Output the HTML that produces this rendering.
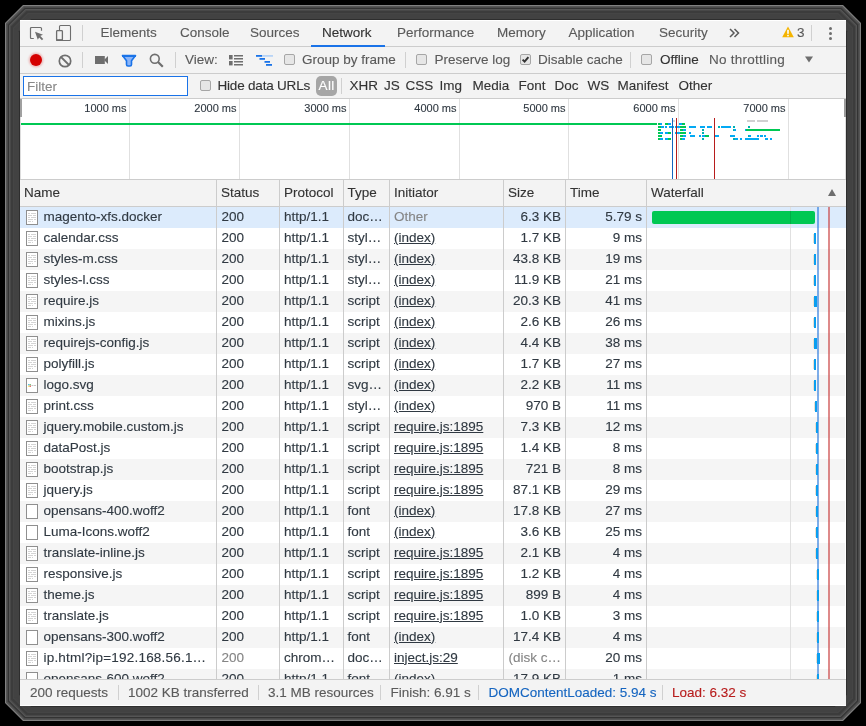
<!DOCTYPE html><html><head><meta charset="utf-8"><style>
*{margin:0;padding:0;box-sizing:border-box}
html,body{width:866px;height:726px;overflow:hidden;background:#000}
body{position:relative;font-family:"Liberation Sans",sans-serif;font-size:13.5px;color:#303942}
.a{position:absolute;white-space:nowrap}
.t{line-height:16px;height:16px;-webkit-text-stroke:0.12px currentColor}
.bd{background:#cccccc}
.cb{position:absolute;width:11px;height:11px;border:1px solid #a6a6a6;border-radius:2px;background:#e6e6e6}
</style></head><body><div id="w" style="position:absolute;left:0;top:0;width:866px;height:726px;will-change:transform">
<svg class="a" style="left:0;top:0" width="866" height="726"><polygon points="23.0,5 843.0,5 861,23.0 861,703.0 843.0,721 23.0,721 5,703.0 5,23.0" fill="#808080"/><polygon points="23.586,6 842.414,6 860,23.586 860,702.414 842.414,720 23.586,720 6,702.414 6,23.586" fill="#555555"/><polygon points="24.172,7 841.828,7 859,24.172 859,701.828 841.828,719 24.172,719 7,701.828 7,24.172" fill="#4a4a4a"/><polygon points="24.758,8 841.242,8 858,24.758 858,701.242 841.242,718 24.758,718 8,701.242 8,24.758" fill="#333333"/><polygon points="25.344,9 840.656,9 857,25.344 857,700.656 840.656,717 25.344,717 9,700.656 9,25.344" fill="#555555"/><polygon points="25.93,10 840.07,10 856,25.93 856,700.07 840.07,716 25.93,716 10,700.07 10,25.93" fill="#484848"/><polygon points="26.516,11 839.484,11 855,26.516 855,699.484 839.484,715 26.516,715 11,699.484 11,26.516" fill="#3c3c3c"/><polygon points="27.102,12 838.898,12 854,27.102 854,698.898 838.898,714 27.102,714 12,698.898 12,27.102" fill="#3c3c3c"/><polygon points="27.688000000000002,13 838.312,13 853,27.688000000000002 853,698.312 838.312,713 27.688000000000002,713 13,698.312 13,27.688000000000002" fill="#454545"/><polygon points="28.274,14 837.726,14 852,28.274 852,697.726 837.726,712 28.274,712 14,697.726 14,28.274" fill="#424242"/><polygon points="28.86,15 837.14,15 851,28.86 851,697.14 837.14,711 28.86,711 15,697.14 15,28.86" fill="#424242"/><polygon points="29.446,16 836.554,16 850,29.446 850,696.554 836.554,710 29.446,710 16,696.554 16,29.446" fill="#424242"/><polygon points="30.032,17 835.968,17 849,30.032 849,695.968 835.968,709 30.032,709 17,695.968 17,30.032" fill="#424242"/><polygon points="30.618000000000002,18 835.382,18 848,30.618000000000002 848,695.382 835.382,708 30.618000000000002,708 18,695.382 18,30.618000000000002" fill="#424242"/><polygon points="31.204,19 834.796,19 847,31.204 847,694.796 834.796,707 31.204,707 19,694.796 19,31.204" fill="#2e2e2e"/></svg>
<div class="a" style="left:20px;top:20px;width:826px;height:686px;background:#f3f3f3;overflow:hidden"></div>
<div class="a" style="left:20px;top:20px;width:826px;height:1px;background:#fff"></div>
<div class="a" style="left:20px;top:705px;width:826px;height:1px;background:#fff"></div>
<div class="a" style="left:20px;top:46px;width:826px;height:1px;background:#cccccc;"></div>
<div class="a t" style="left:100.5px;top:25px;color:#5a5a5a;">Elements</div>
<div class="a t" style="left:180px;top:25px;color:#5a5a5a;">Console</div>
<div class="a t" style="left:250px;top:25px;color:#5a5a5a;">Sources</div>
<div class="a t" style="left:322px;top:25px;color:#333333;">Network</div>
<div class="a t" style="left:397px;top:25px;color:#5a5a5a;">Performance</div>
<div class="a t" style="left:497px;top:25px;color:#5a5a5a;">Memory</div>
<div class="a t" style="left:568.5px;top:25px;color:#5a5a5a;">Application</div>
<div class="a t" style="left:659px;top:25px;color:#5a5a5a;">Security</div>
<div class="a" style="left:311px;top:45px;width:74px;height:2px;background:#1a73e8;"></div>
<svg class="a" style="left:29px;top:26px" width="16" height="16" viewBox="0 0 16 16"><path d="M4.8 12.5H2.5Q1.5 12.5 1.5 11.5V2.5Q1.5 1.5 2.5 1.5H11.5Q12.5 1.5 12.5 2.5V4.8" fill="none" stroke="#6e6e6e" stroke-width="1.2"/><path d="M6 5.8L14 8.7L11 10L8.8 13.8Z" fill="#6e6e6e"/><path d="M10 10L13.6 13.6" stroke="#6e6e6e" stroke-width="1.8"/></svg>
<svg class="a" style="left:55px;top:24px" width="17" height="18" viewBox="0 0 17 18"><rect x="4.5" y="1.5" width="11" height="15" rx="1" fill="none" stroke="#6e6e6e" stroke-width="1.1"/><rect x="1.6" y="6.6" width="5.8" height="9.8" rx="0.8" fill="#f3f3f3" stroke="#6e6e6e" stroke-width="1.3"/><rect x="1" y="15.2" width="7" height="1.6" fill="#6e6e6e"/></svg>
<div class="a" style="left:82px;top:25px;width:1px;height:16px;background:#d0d0d0;"></div>
<svg class="a" style="left:729px;top:28px" width="11" height="10" viewBox="0 0 11 10"><path d="M1 1L5 5L1 9M5.5 1L9.5 5L5.5 9" fill="none" stroke="#5a5a5a" stroke-width="1.5"/></svg>
<svg class="a" style="left:782px;top:26px" width="12" height="12" viewBox="0 0 12 12"><path d="M6 0.5L11.8 11.2H0.2Z" fill="#f4b400"/><rect x="5.2" y="3.8" width="1.6" height="4" fill="#fff"/><rect x="5.2" y="8.8" width="1.6" height="1.5" fill="#fff"/></svg>
<div class="a t" style="left:797px;top:25px;color:#5a5a5a;">3</div>
<div class="a" style="left:811px;top:25px;width:1px;height:16px;background:#d0d0d0;"></div>
<div class="a" style="left:828.6px;top:26.7px;width:3.4px;height:3.4px;border-radius:2px;background:#6e6e6e"></div>
<div class="a" style="left:828.6px;top:31.7px;width:3.4px;height:3.4px;border-radius:2px;background:#6e6e6e"></div>
<div class="a" style="left:828.6px;top:36.7px;width:3.4px;height:3.4px;border-radius:2px;background:#6e6e6e"></div>
<div class="a" style="left:20px;top:73px;width:826px;height:1px;background:#cccccc;"></div>
<div class="a" style="left:30px;top:54px;width:12px;height:12px;border-radius:6px;background:#d50000;box-shadow:0 0 2px 1.5px rgba(220,0,0,0.22)"></div>
<svg class="a" style="left:57.5px;top:53.5px" width="14" height="14" viewBox="0 0 14 14"><circle cx="7" cy="7" r="5.7" fill="none" stroke="#6e6e6e" stroke-width="1.7"/><path d="M3 3L11 11" stroke="#6e6e6e" stroke-width="1.8"/></svg>
<div class="a" style="left:82px;top:52px;width:1px;height:16px;background:#d0d0d0;"></div>
<svg class="a" style="left:95px;top:56px" width="13" height="8" viewBox="0 0 13 8"><rect x="0" y="0" width="9.8" height="8" fill="#6e6e6e"/><path d="M9 4L13 0V8Z" fill="#6e6e6e"/></svg>
<svg class="a" style="left:121px;top:54px" width="16" height="13" viewBox="0 0 16 13"><path d="M1.5 1.5H14.5L10.5 6.8V10.5Q10.5 12 9 12H7Q5.5 12 5.5 10.5V6.8Z" fill="#8ab4f8" stroke="#1a73e8" stroke-width="1.6" stroke-linejoin="round"/><rect x="1" y="1" width="14" height="2" fill="#1a73e8"/></svg>
<svg class="a" style="left:149px;top:53px" width="15" height="15" viewBox="0 0 15 15"><circle cx="5.8" cy="5.8" r="4.4" fill="none" stroke="#6e6e6e" stroke-width="1.6"/><path d="M9 9L13.8 13.8" stroke="#6e6e6e" stroke-width="2.2"/></svg>
<div class="a" style="left:175px;top:52px;width:1px;height:16px;background:#d0d0d0;"></div>
<div class="a t" style="left:185px;top:52px;color:#5a5a5a;">View:</div>
<svg class="a" style="left:229px;top:55px" width="14" height="11" viewBox="0 0 14 11"><rect x="0" y="0" width="3.6" height="4.4" fill="#6e6e6e"/><rect x="0" y="6" width="3.6" height="4.4" fill="#6e6e6e"/><rect x="5" y="0" width="9" height="1.5" fill="#6e6e6e"/><rect x="5" y="3" width="9" height="1.5" fill="#6e6e6e"/><rect x="5" y="6" width="9" height="1.5" fill="#6e6e6e"/><rect x="5" y="9" width="9" height="1.5" fill="#6e6e6e"/></svg>
<svg class="a" style="left:256px;top:55px" width="17" height="11" viewBox="0 0 17 11"><rect x="6" y="0" width="11" height="1.8" fill="#b8d4f6"/><rect x="0" y="0" width="6" height="1.8" fill="#1a73e8"/><rect x="3.5" y="3" width="5.5" height="1.8" fill="#1a73e8"/><rect x="8.5" y="6" width="5.5" height="1.8" fill="#1a73e8"/><rect x="10" y="9" width="6" height="1.8" fill="#1a73e8"/></svg>
<div class="cb" style="left:284px;top:54px"></div>
<div class="a t" style="left:302px;top:52px;color:#5a5a5a;">Group by frame</div>
<div class="a" style="left:405px;top:52px;width:1px;height:16px;background:#d0d0d0;"></div>
<div class="cb" style="left:416px;top:54px"></div>
<div class="a t" style="left:434.5px;top:52px;color:#5a5a5a;">Preserve log</div>
<div class="cb" style="left:520px;top:54px"></div>
<svg class="a" style="left:520px;top:54px" width="11" height="11" viewBox="0 0 11 11"><path d="M2.6 5.6L4.6 7.6L8.4 3.2" fill="none" stroke="#333" stroke-width="2"/></svg>
<div class="a t" style="left:538px;top:52px;color:#5a5a5a;">Disable cache</div>
<div class="a" style="left:630px;top:52px;width:1px;height:16px;background:#d0d0d0;"></div>
<div class="cb" style="left:641px;top:54px"></div>
<div class="a t" style="left:660px;top:52px;color:#333333;">Offline</div>
<div class="a t" style="left:709px;top:52px;color:#5a5a5a;letter-spacing:0.25px">No throttling</div>
<svg class="a" style="left:805px;top:56px" width="8" height="7" viewBox="0 0 8 7"><path d="M0 0.5H8L4 6.5Z" fill="#6e6e6e"/></svg>
<div class="a" style="left:20px;top:98px;width:826px;height:1px;background:#cccccc;"></div>
<div class="a" style="left:23px;top:76px;width:165px;height:20px;border:1px solid #1a73e8;background:#fff"></div>
<div class="a t" style="left:27px;top:79px;color:#888888;">Filter</div>
<div class="cb" style="left:200px;top:80px"></div>
<div class="a t" style="left:217.5px;top:78px;color:#333333;letter-spacing:-0.2px">Hide data URLs</div>
<div class="a" style="left:316px;top:76px;width:21px;height:20px;border-radius:5px;background:#a6a6a6"></div>
<div class="a t" style="left:318.5px;top:78px;color:#ffffff;letter-spacing:0.4px">All</div>
<div class="a" style="left:341px;top:78px;width:1px;height:16px;background:#d0d0d0;"></div>
<div class="a t" style="left:349.5px;top:78px;color:#333333;">XHR</div>
<div class="a t" style="left:384px;top:78px;color:#333333;">JS</div>
<div class="a t" style="left:405.5px;top:78px;color:#333333;">CSS</div>
<div class="a t" style="left:439.5px;top:78px;color:#333333;">Img</div>
<div class="a t" style="left:472.5px;top:78px;color:#333333;">Media</div>
<div class="a t" style="left:518.5px;top:78px;color:#333333;">Font</div>
<div class="a t" style="left:554.5px;top:78px;color:#333333;">Doc</div>
<div class="a t" style="left:587.5px;top:78px;color:#333333;">WS</div>
<div class="a t" style="left:617.5px;top:78px;color:#333333;">Manifest</div>
<div class="a t" style="left:678.5px;top:78px;color:#333333;">Other</div>
<div class="a" style="left:20px;top:99px;width:826px;height:80px;background:#ffffff;"></div>
<div class="a" style="left:20px;top:179px;width:826px;height:1px;background:#cccccc;"></div>
<div class="a" style="left:20px;top:99px;width:2px;height:18px;background:#a0a0a0;"></div>
<div class="a" style="left:20px;top:117px;width:1px;height:62px;background:#dddddd;"></div>
<div class="a" style="left:129px;top:99px;width:1px;height:80px;background:#e0e0e0;"></div>
<div class="a t" style="right:739.5px;top:100px;color:#303942;font-size:11px">1000 ms</div>
<div class="a" style="left:239px;top:99px;width:1px;height:80px;background:#e0e0e0;"></div>
<div class="a t" style="right:629.5px;top:100px;color:#303942;font-size:11px">2000 ms</div>
<div class="a" style="left:349px;top:99px;width:1px;height:80px;background:#e0e0e0;"></div>
<div class="a t" style="right:519.5px;top:100px;color:#303942;font-size:11px">3000 ms</div>
<div class="a" style="left:459px;top:99px;width:1px;height:80px;background:#e0e0e0;"></div>
<div class="a t" style="right:409.5px;top:100px;color:#303942;font-size:11px">4000 ms</div>
<div class="a" style="left:568px;top:99px;width:1px;height:80px;background:#e0e0e0;"></div>
<div class="a t" style="right:300.5px;top:100px;color:#303942;font-size:11px">5000 ms</div>
<div class="a" style="left:678px;top:99px;width:1px;height:80px;background:#e0e0e0;"></div>
<div class="a t" style="right:190.5px;top:100px;color:#303942;font-size:11px">6000 ms</div>
<div class="a" style="left:788px;top:99px;width:1px;height:80px;background:#e0e0e0;"></div>
<div class="a t" style="right:80.5px;top:100px;color:#303942;font-size:11px">7000 ms</div>
<div class="a" style="left:21px;top:123px;width:636px;height:2px;background:#00c853;"></div>
<div class="a" style="left:844px;top:99px;width:2px;height:18px;background:#9a9a9a;"></div>
<div class="a" style="left:658px;top:123px;width:2px;height:2px;background:#00c853;"></div>
<div class="a" style="left:660px;top:123px;width:2px;height:2px;background:#03a9f4;"></div>
<div class="a" style="left:665px;top:123px;width:3px;height:2px;background:#00c853;"></div>
<div class="a" style="left:668px;top:123px;width:3px;height:2px;background:#03a9f4;"></div>
<div class="a" style="left:679px;top:123px;width:3px;height:2px;background:#03a9f4;"></div>
<div class="a" style="left:682px;top:123px;width:3px;height:2px;background:#00c853;"></div>
<div class="a" style="left:658px;top:126px;width:3px;height:2px;background:#00c853;"></div>
<div class="a" style="left:661px;top:126px;width:3px;height:2px;background:#03a9f4;"></div>
<div class="a" style="left:665px;top:126px;width:2px;height:2px;background:#03a9f4;"></div>
<div class="a" style="left:669px;top:126px;width:5px;height:2px;background:#03a9f4;"></div>
<div class="a" style="left:675px;top:126px;width:5px;height:2px;background:#03a9f4;"></div>
<div class="a" style="left:680px;top:126px;width:6px;height:2px;background:#00c853;"></div>
<div class="a" style="left:689px;top:126px;width:7px;height:2px;background:#03a9f4;"></div>
<div class="a" style="left:700px;top:126px;width:5px;height:2px;background:#03a9f4;"></div>
<div class="a" style="left:707px;top:126px;width:5px;height:2px;background:#03a9f4;"></div>
<div class="a" style="left:718px;top:126px;width:2px;height:2px;background:#00b0b0;"></div>
<div class="a" style="left:721px;top:126px;width:10px;height:2px;background:#03a9f4;"></div>
<div class="a" style="left:733px;top:126px;width:2px;height:2px;background:#00b0b0;"></div>
<div class="a" style="left:748px;top:126px;width:2px;height:2px;background:#00b0b0;"></div>
<div class="a" style="left:658px;top:129px;width:3px;height:2px;background:#00c853;"></div>
<div class="a" style="left:680px;top:129px;width:3px;height:2px;background:#00c853;"></div>
<div class="a" style="left:683px;top:129px;width:3px;height:2px;background:#03a9f4;"></div>
<div class="a" style="left:702px;top:129px;width:2px;height:2px;background:#00b0b0;"></div>
<div class="a" style="left:733px;top:129px;width:1px;height:2px;background:#00b0b0;"></div>
<div class="a" style="left:734px;top:129px;width:2px;height:2px;background:#03a9f4;"></div>
<div class="a" style="left:745px;top:129px;width:2px;height:2px;background:#03a9f4;"></div>
<div class="a" style="left:658px;top:132px;width:2px;height:2px;background:#00c853;"></div>
<div class="a" style="left:660px;top:132px;width:3px;height:2px;background:#03a9f4;"></div>
<div class="a" style="left:665px;top:132px;width:3px;height:2px;background:#03a9f4;"></div>
<div class="a" style="left:668px;top:132px;width:3px;height:2px;background:#00c853;"></div>
<div class="a" style="left:675px;top:132px;width:5px;height:2px;background:#03a9f4;"></div>
<div class="a" style="left:680px;top:132px;width:6px;height:2px;background:#00c853;"></div>
<div class="a" style="left:689px;top:132px;width:2px;height:2px;background:#03a9f4;"></div>
<div class="a" style="left:702px;top:132px;width:2px;height:2px;background:#00b0b0;"></div>
<div class="a" style="left:658px;top:135px;width:4px;height:2px;background:#00c853;"></div>
<div class="a" style="left:680px;top:135px;width:3px;height:2px;background:#00c853;"></div>
<div class="a" style="left:683px;top:135px;width:3px;height:2px;background:#03a9f4;"></div>
<div class="a" style="left:690px;top:135px;width:5px;height:2px;background:#03a9f4;"></div>
<div class="a" style="left:699px;top:135px;width:2px;height:2px;background:#03a9f4;"></div>
<div class="a" style="left:702px;top:135px;width:3px;height:2px;background:#03a9f4;"></div>
<div class="a" style="left:705px;top:135px;width:4px;height:2px;background:#00c853;"></div>
<div class="a" style="left:715px;top:135px;width:4px;height:2px;background:#03a9f4;"></div>
<div class="a" style="left:730px;top:135px;width:5px;height:2px;background:#03a9f4;"></div>
<div class="a" style="left:748px;top:135px;width:1px;height:2px;background:#00b0b0;"></div>
<div class="a" style="left:749px;top:135px;width:2px;height:2px;background:#03a9f4;"></div>
<div class="a" style="left:757px;top:135px;width:2px;height:2px;background:#03a9f4;"></div>
<div class="a" style="left:760px;top:135px;width:3px;height:2px;background:#03a9f4;"></div>
<div class="a" style="left:764px;top:135px;width:2px;height:2px;background:#03a9f4;"></div>
<div class="a" style="left:658px;top:138px;width:2px;height:2px;background:#00c853;"></div>
<div class="a" style="left:660px;top:138px;width:3px;height:2px;background:#03a9f4;"></div>
<div class="a" style="left:665px;top:138px;width:3px;height:2px;background:#03a9f4;"></div>
<div class="a" style="left:668px;top:138px;width:3px;height:2px;background:#00c853;"></div>
<div class="a" style="left:680px;top:138px;width:2px;height:2px;background:#00c853;"></div>
<div class="a" style="left:682px;top:138px;width:3px;height:2px;background:#03a9f4;"></div>
<div class="a" style="left:702px;top:138px;width:2px;height:2px;background:#00b0b0;"></div>
<div class="a" style="left:733px;top:138px;width:2px;height:2px;background:#00b0b0;"></div>
<div class="a" style="left:735px;top:138px;width:3px;height:2px;background:#03a9f4;"></div>
<div class="a" style="left:740px;top:138px;width:2px;height:2px;background:#03a9f4;"></div>
<div class="a" style="left:745px;top:138px;width:14px;height:2px;background:#03a9f4;"></div>
<div class="a" style="left:765px;top:138px;width:3px;height:2px;background:#03a9f4;"></div>
<div class="a" style="left:770px;top:138px;width:2px;height:2px;background:#03a9f4;"></div>
<div class="a" style="left:747px;top:120px;width:8px;height:2px;background:#d0d0d0;"></div>
<div class="a" style="left:757px;top:120px;width:11px;height:2px;background:#d0d0d0;"></div>
<div class="a" style="left:673px;top:120px;width:2px;height:2px;background:#d8d8d8;"></div>
<div class="a" style="left:746px;top:129px;width:34px;height:2px;background:#00c853;"></div>
<div class="a" style="left:672px;top:118px;width:1px;height:61px;background:#1565c0;"></div>
<div class="a" style="left:676px;top:118px;width:1px;height:61px;background:#b71c1c;"></div>
<div class="a" style="left:714px;top:118px;width:1px;height:61px;background:#b71c1c;"></div>
<div class="a" style="left:20px;top:180px;width:826px;height:26px;background:#f3f3f3;"></div>
<div class="a" style="left:20px;top:206px;width:826px;height:1px;background:#cccccc;"></div>
<div class="a t" style="left:24px;top:185px;color:#333333;">Name</div>
<div class="a t" style="left:221px;top:185px;color:#333333;">Status</div>
<div class="a t" style="left:284px;top:185px;color:#333333;">Protocol</div>
<div class="a t" style="left:347.5px;top:185px;color:#333333;">Type</div>
<div class="a t" style="left:394px;top:185px;color:#333333;">Initiator</div>
<div class="a t" style="left:508px;top:185px;color:#333333;">Size</div>
<div class="a t" style="left:570px;top:185px;color:#333333;">Time</div>
<div class="a t" style="left:651px;top:185px;color:#333333;">Waterfall</div>
<svg class="a" style="left:828px;top:189px" width="8" height="7" viewBox="0 0 8 7"><path d="M0 7H8L4 0Z" fill="#6e6e6e"/></svg>
<div class="a" style="left:20px;top:207px;width:826px;height:21px;background:#dcebfc;"></div>
<div class="a" style="left:20px;top:228px;width:826px;height:21px;background:#ffffff;"></div>
<div class="a" style="left:20px;top:249px;width:826px;height:21px;background:#f5f5f5;"></div>
<div class="a" style="left:20px;top:270px;width:826px;height:21px;background:#ffffff;"></div>
<div class="a" style="left:20px;top:291px;width:826px;height:21px;background:#f5f5f5;"></div>
<div class="a" style="left:20px;top:312px;width:826px;height:21px;background:#ffffff;"></div>
<div class="a" style="left:20px;top:333px;width:826px;height:21px;background:#f5f5f5;"></div>
<div class="a" style="left:20px;top:354px;width:826px;height:21px;background:#ffffff;"></div>
<div class="a" style="left:20px;top:375px;width:826px;height:21px;background:#f5f5f5;"></div>
<div class="a" style="left:20px;top:396px;width:826px;height:21px;background:#ffffff;"></div>
<div class="a" style="left:20px;top:417px;width:826px;height:21px;background:#f5f5f5;"></div>
<div class="a" style="left:20px;top:438px;width:826px;height:21px;background:#ffffff;"></div>
<div class="a" style="left:20px;top:459px;width:826px;height:21px;background:#f5f5f5;"></div>
<div class="a" style="left:20px;top:480px;width:826px;height:21px;background:#ffffff;"></div>
<div class="a" style="left:20px;top:501px;width:826px;height:21px;background:#f5f5f5;"></div>
<div class="a" style="left:20px;top:522px;width:826px;height:21px;background:#ffffff;"></div>
<div class="a" style="left:20px;top:543px;width:826px;height:21px;background:#f5f5f5;"></div>
<div class="a" style="left:20px;top:564px;width:826px;height:21px;background:#ffffff;"></div>
<div class="a" style="left:20px;top:585px;width:826px;height:21px;background:#f5f5f5;"></div>
<div class="a" style="left:20px;top:606px;width:826px;height:21px;background:#ffffff;"></div>
<div class="a" style="left:20px;top:627px;width:826px;height:21px;background:#f5f5f5;"></div>
<div class="a" style="left:20px;top:648px;width:826px;height:21px;background:#ffffff;"></div>
<div class="a" style="left:20px;top:669px;width:826px;height:10px;background:#f5f5f5;"></div>
<div class="a" style="left:790px;top:207px;width:1px;height:472px;background:#e0e0e0;"></div>
<div class="a" style="left:216px;top:180px;width:1px;height:499px;background:#cccccc;"></div>
<div class="a" style="left:279px;top:180px;width:1px;height:499px;background:#cccccc;"></div>
<div class="a" style="left:343px;top:180px;width:1px;height:499px;background:#cccccc;"></div>
<div class="a" style="left:389px;top:180px;width:1px;height:499px;background:#cccccc;"></div>
<div class="a" style="left:503px;top:180px;width:1px;height:499px;background:#cccccc;"></div>
<div class="a" style="left:565px;top:180px;width:1px;height:499px;background:#cccccc;"></div>
<div class="a" style="left:646px;top:180px;width:1px;height:499px;background:#cccccc;"></div>
<div class="a" style="left:20px;top:679px;width:826px;height:1px;background:#cccccc;"></div>
<div class="a" style="left:20px;top:207px;width:826px;height:472px;overflow:hidden">
<svg class="a" style="left:6px;top:3px" width="12" height="15" viewBox="0 0 12 15"><rect x="0.5" y="0.5" width="11" height="14" fill="#fff" stroke="#8f8f8f" stroke-width="1"/><rect x="2" y="3" width="2" height="1" fill="#d4d4d4"/><rect x="5" y="3" width="5" height="1" fill="#d4d4d4"/><rect x="2" y="5" width="4" height="1" fill="#d4d4d4"/><rect x="7" y="5" width="3" height="1" fill="#d4d4d4"/><rect x="2" y="7" width="2" height="1" fill="#d4d4d4"/><rect x="5" y="7" width="5" height="1" fill="#d4d4d4"/><rect x="2" y="9" width="5" height="1" fill="#d4d4d4"/><rect x="8" y="9" width="2" height="1" fill="#d4d4d4"/><rect x="2" y="11" width="3" height="1" fill="#d4d4d4"/><rect x="6" y="11" width="1" height="1" fill="#d4d4d4"/></svg>
<div class="a t" style="left:23.5px;top:1.5px;">magento-xfs.docker</div>
<div class="a t" style="left:201.5px;top:1.5px;">200</div>
<div class="a t" style="left:264px;top:1.5px;">http/1.1</div>
<div class="a t" style="left:327.5px;top:1.5px;">doc…</div>
<div class="a t" style="left:374px;top:1.5px;color:#858585;">Other</div>
<div class="a t" style="right:285px;top:1.5px;">6.3 KB</div>
<div class="a t" style="right:204px;top:1.5px;">5.79 s</div>
<svg class="a" style="left:6px;top:24px" width="12" height="15" viewBox="0 0 12 15"><rect x="0.5" y="0.5" width="11" height="14" fill="#fff" stroke="#8f8f8f" stroke-width="1"/><rect x="2" y="3" width="2" height="1" fill="#d4d4d4"/><rect x="5" y="3" width="5" height="1" fill="#d4d4d4"/><rect x="2" y="5" width="4" height="1" fill="#d4d4d4"/><rect x="7" y="5" width="3" height="1" fill="#d4d4d4"/><rect x="2" y="7" width="2" height="1" fill="#d4d4d4"/><rect x="5" y="7" width="5" height="1" fill="#d4d4d4"/><rect x="2" y="9" width="5" height="1" fill="#d4d4d4"/><rect x="8" y="9" width="2" height="1" fill="#d4d4d4"/><rect x="2" y="11" width="3" height="1" fill="#d4d4d4"/><rect x="6" y="11" width="1" height="1" fill="#d4d4d4"/></svg>
<div class="a t" style="left:23.5px;top:22.5px;">calendar.css</div>
<div class="a t" style="left:201.5px;top:22.5px;">200</div>
<div class="a t" style="left:264px;top:22.5px;">http/1.1</div>
<div class="a t" style="left:327.5px;top:22.5px;">styl…</div>
<div class="a t" style="left:374px;top:22.5px;text-decoration:underline">(index)</div>
<div class="a t" style="right:285px;top:22.5px;">1.7 KB</div>
<div class="a t" style="right:204px;top:22.5px;">9 ms</div>
<svg class="a" style="left:6px;top:45px" width="12" height="15" viewBox="0 0 12 15"><rect x="0.5" y="0.5" width="11" height="14" fill="#fff" stroke="#8f8f8f" stroke-width="1"/><rect x="2" y="3" width="2" height="1" fill="#d4d4d4"/><rect x="5" y="3" width="5" height="1" fill="#d4d4d4"/><rect x="2" y="5" width="4" height="1" fill="#d4d4d4"/><rect x="7" y="5" width="3" height="1" fill="#d4d4d4"/><rect x="2" y="7" width="2" height="1" fill="#d4d4d4"/><rect x="5" y="7" width="5" height="1" fill="#d4d4d4"/><rect x="2" y="9" width="5" height="1" fill="#d4d4d4"/><rect x="8" y="9" width="2" height="1" fill="#d4d4d4"/><rect x="2" y="11" width="3" height="1" fill="#d4d4d4"/><rect x="6" y="11" width="1" height="1" fill="#d4d4d4"/></svg>
<div class="a t" style="left:23.5px;top:43.5px;">styles-m.css</div>
<div class="a t" style="left:201.5px;top:43.5px;">200</div>
<div class="a t" style="left:264px;top:43.5px;">http/1.1</div>
<div class="a t" style="left:327.5px;top:43.5px;">styl…</div>
<div class="a t" style="left:374px;top:43.5px;text-decoration:underline">(index)</div>
<div class="a t" style="right:285px;top:43.5px;">43.8 KB</div>
<div class="a t" style="right:204px;top:43.5px;">19 ms</div>
<svg class="a" style="left:6px;top:66px" width="12" height="15" viewBox="0 0 12 15"><rect x="0.5" y="0.5" width="11" height="14" fill="#fff" stroke="#8f8f8f" stroke-width="1"/><rect x="2" y="3" width="2" height="1" fill="#d4d4d4"/><rect x="5" y="3" width="5" height="1" fill="#d4d4d4"/><rect x="2" y="5" width="4" height="1" fill="#d4d4d4"/><rect x="7" y="5" width="3" height="1" fill="#d4d4d4"/><rect x="2" y="7" width="2" height="1" fill="#d4d4d4"/><rect x="5" y="7" width="5" height="1" fill="#d4d4d4"/><rect x="2" y="9" width="5" height="1" fill="#d4d4d4"/><rect x="8" y="9" width="2" height="1" fill="#d4d4d4"/><rect x="2" y="11" width="3" height="1" fill="#d4d4d4"/><rect x="6" y="11" width="1" height="1" fill="#d4d4d4"/></svg>
<div class="a t" style="left:23.5px;top:64.5px;">styles-l.css</div>
<div class="a t" style="left:201.5px;top:64.5px;">200</div>
<div class="a t" style="left:264px;top:64.5px;">http/1.1</div>
<div class="a t" style="left:327.5px;top:64.5px;">styl…</div>
<div class="a t" style="left:374px;top:64.5px;text-decoration:underline">(index)</div>
<div class="a t" style="right:285px;top:64.5px;">11.9 KB</div>
<div class="a t" style="right:204px;top:64.5px;">21 ms</div>
<svg class="a" style="left:6px;top:87px" width="12" height="15" viewBox="0 0 12 15"><rect x="0.5" y="0.5" width="11" height="14" fill="#fff" stroke="#8f8f8f" stroke-width="1"/><rect x="2" y="3" width="2" height="1" fill="#d4d4d4"/><rect x="5" y="3" width="5" height="1" fill="#d4d4d4"/><rect x="2" y="5" width="4" height="1" fill="#d4d4d4"/><rect x="7" y="5" width="3" height="1" fill="#d4d4d4"/><rect x="2" y="7" width="2" height="1" fill="#d4d4d4"/><rect x="5" y="7" width="5" height="1" fill="#d4d4d4"/><rect x="2" y="9" width="5" height="1" fill="#d4d4d4"/><rect x="8" y="9" width="2" height="1" fill="#d4d4d4"/><rect x="2" y="11" width="3" height="1" fill="#d4d4d4"/><rect x="6" y="11" width="1" height="1" fill="#d4d4d4"/></svg>
<div class="a t" style="left:23.5px;top:85.5px;">require.js</div>
<div class="a t" style="left:201.5px;top:85.5px;">200</div>
<div class="a t" style="left:264px;top:85.5px;">http/1.1</div>
<div class="a t" style="left:327.5px;top:85.5px;">script</div>
<div class="a t" style="left:374px;top:85.5px;text-decoration:underline">(index)</div>
<div class="a t" style="right:285px;top:85.5px;">20.3 KB</div>
<div class="a t" style="right:204px;top:85.5px;">41 ms</div>
<svg class="a" style="left:6px;top:108px" width="12" height="15" viewBox="0 0 12 15"><rect x="0.5" y="0.5" width="11" height="14" fill="#fff" stroke="#8f8f8f" stroke-width="1"/><rect x="2" y="3" width="2" height="1" fill="#d4d4d4"/><rect x="5" y="3" width="5" height="1" fill="#d4d4d4"/><rect x="2" y="5" width="4" height="1" fill="#d4d4d4"/><rect x="7" y="5" width="3" height="1" fill="#d4d4d4"/><rect x="2" y="7" width="2" height="1" fill="#d4d4d4"/><rect x="5" y="7" width="5" height="1" fill="#d4d4d4"/><rect x="2" y="9" width="5" height="1" fill="#d4d4d4"/><rect x="8" y="9" width="2" height="1" fill="#d4d4d4"/><rect x="2" y="11" width="3" height="1" fill="#d4d4d4"/><rect x="6" y="11" width="1" height="1" fill="#d4d4d4"/></svg>
<div class="a t" style="left:23.5px;top:106.5px;">mixins.js</div>
<div class="a t" style="left:201.5px;top:106.5px;">200</div>
<div class="a t" style="left:264px;top:106.5px;">http/1.1</div>
<div class="a t" style="left:327.5px;top:106.5px;">script</div>
<div class="a t" style="left:374px;top:106.5px;text-decoration:underline">(index)</div>
<div class="a t" style="right:285px;top:106.5px;">2.6 KB</div>
<div class="a t" style="right:204px;top:106.5px;">26 ms</div>
<svg class="a" style="left:6px;top:129px" width="12" height="15" viewBox="0 0 12 15"><rect x="0.5" y="0.5" width="11" height="14" fill="#fff" stroke="#8f8f8f" stroke-width="1"/><rect x="2" y="3" width="2" height="1" fill="#d4d4d4"/><rect x="5" y="3" width="5" height="1" fill="#d4d4d4"/><rect x="2" y="5" width="4" height="1" fill="#d4d4d4"/><rect x="7" y="5" width="3" height="1" fill="#d4d4d4"/><rect x="2" y="7" width="2" height="1" fill="#d4d4d4"/><rect x="5" y="7" width="5" height="1" fill="#d4d4d4"/><rect x="2" y="9" width="5" height="1" fill="#d4d4d4"/><rect x="8" y="9" width="2" height="1" fill="#d4d4d4"/><rect x="2" y="11" width="3" height="1" fill="#d4d4d4"/><rect x="6" y="11" width="1" height="1" fill="#d4d4d4"/></svg>
<div class="a t" style="left:23.5px;top:127.5px;">requirejs-config.js</div>
<div class="a t" style="left:201.5px;top:127.5px;">200</div>
<div class="a t" style="left:264px;top:127.5px;">http/1.1</div>
<div class="a t" style="left:327.5px;top:127.5px;">script</div>
<div class="a t" style="left:374px;top:127.5px;text-decoration:underline">(index)</div>
<div class="a t" style="right:285px;top:127.5px;">4.4 KB</div>
<div class="a t" style="right:204px;top:127.5px;">38 ms</div>
<svg class="a" style="left:6px;top:150px" width="12" height="15" viewBox="0 0 12 15"><rect x="0.5" y="0.5" width="11" height="14" fill="#fff" stroke="#8f8f8f" stroke-width="1"/><rect x="2" y="3" width="2" height="1" fill="#d4d4d4"/><rect x="5" y="3" width="5" height="1" fill="#d4d4d4"/><rect x="2" y="5" width="4" height="1" fill="#d4d4d4"/><rect x="7" y="5" width="3" height="1" fill="#d4d4d4"/><rect x="2" y="7" width="2" height="1" fill="#d4d4d4"/><rect x="5" y="7" width="5" height="1" fill="#d4d4d4"/><rect x="2" y="9" width="5" height="1" fill="#d4d4d4"/><rect x="8" y="9" width="2" height="1" fill="#d4d4d4"/><rect x="2" y="11" width="3" height="1" fill="#d4d4d4"/><rect x="6" y="11" width="1" height="1" fill="#d4d4d4"/></svg>
<div class="a t" style="left:23.5px;top:148.5px;">polyfill.js</div>
<div class="a t" style="left:201.5px;top:148.5px;">200</div>
<div class="a t" style="left:264px;top:148.5px;">http/1.1</div>
<div class="a t" style="left:327.5px;top:148.5px;">script</div>
<div class="a t" style="left:374px;top:148.5px;text-decoration:underline">(index)</div>
<div class="a t" style="right:285px;top:148.5px;">1.7 KB</div>
<div class="a t" style="right:204px;top:148.5px;">27 ms</div>
<svg class="a" style="left:6px;top:171px" width="12" height="15" viewBox="0 0 12 15"><rect x="0.5" y="0.5" width="11" height="14" fill="#fff" stroke="#8f8f8f" stroke-width="1"/><rect x="2" y="6" width="1.5" height="1.5" fill="#4fc3f7"/><rect x="3.5" y="6" width="1.5" height="1.5" fill="#81c784"/><rect x="2" y="7.5" width="1.5" height="1.5" fill="#fff176"/><rect x="3.5" y="7.5" width="1.5" height="1.5" fill="#e57373"/><rect x="5.5" y="7" width="2" height="1" fill="#c8c8c8"/><rect x="8" y="7" width="2" height="1" fill="#c8c8c8"/></svg>
<div class="a t" style="left:23.5px;top:169.5px;">logo.svg</div>
<div class="a t" style="left:201.5px;top:169.5px;">200</div>
<div class="a t" style="left:264px;top:169.5px;">http/1.1</div>
<div class="a t" style="left:327.5px;top:169.5px;">svg…</div>
<div class="a t" style="left:374px;top:169.5px;text-decoration:underline">(index)</div>
<div class="a t" style="right:285px;top:169.5px;">2.2 KB</div>
<div class="a t" style="right:204px;top:169.5px;">11 ms</div>
<svg class="a" style="left:6px;top:192px" width="12" height="15" viewBox="0 0 12 15"><rect x="0.5" y="0.5" width="11" height="14" fill="#fff" stroke="#8f8f8f" stroke-width="1"/><rect x="2" y="3" width="2" height="1" fill="#d4d4d4"/><rect x="5" y="3" width="5" height="1" fill="#d4d4d4"/><rect x="2" y="5" width="4" height="1" fill="#d4d4d4"/><rect x="7" y="5" width="3" height="1" fill="#d4d4d4"/><rect x="2" y="7" width="2" height="1" fill="#d4d4d4"/><rect x="5" y="7" width="5" height="1" fill="#d4d4d4"/><rect x="2" y="9" width="5" height="1" fill="#d4d4d4"/><rect x="8" y="9" width="2" height="1" fill="#d4d4d4"/><rect x="2" y="11" width="3" height="1" fill="#d4d4d4"/><rect x="6" y="11" width="1" height="1" fill="#d4d4d4"/></svg>
<div class="a t" style="left:23.5px;top:190.5px;">print.css</div>
<div class="a t" style="left:201.5px;top:190.5px;">200</div>
<div class="a t" style="left:264px;top:190.5px;">http/1.1</div>
<div class="a t" style="left:327.5px;top:190.5px;">styl…</div>
<div class="a t" style="left:374px;top:190.5px;text-decoration:underline">(index)</div>
<div class="a t" style="right:285px;top:190.5px;">970 B</div>
<div class="a t" style="right:204px;top:190.5px;">11 ms</div>
<svg class="a" style="left:6px;top:213px" width="12" height="15" viewBox="0 0 12 15"><rect x="0.5" y="0.5" width="11" height="14" fill="#fff" stroke="#8f8f8f" stroke-width="1"/><rect x="2" y="3" width="2" height="1" fill="#d4d4d4"/><rect x="5" y="3" width="5" height="1" fill="#d4d4d4"/><rect x="2" y="5" width="4" height="1" fill="#d4d4d4"/><rect x="7" y="5" width="3" height="1" fill="#d4d4d4"/><rect x="2" y="7" width="2" height="1" fill="#d4d4d4"/><rect x="5" y="7" width="5" height="1" fill="#d4d4d4"/><rect x="2" y="9" width="5" height="1" fill="#d4d4d4"/><rect x="8" y="9" width="2" height="1" fill="#d4d4d4"/><rect x="2" y="11" width="3" height="1" fill="#d4d4d4"/><rect x="6" y="11" width="1" height="1" fill="#d4d4d4"/></svg>
<div class="a t" style="left:23.5px;top:211.5px;">jquery.mobile.custom.js</div>
<div class="a t" style="left:201.5px;top:211.5px;">200</div>
<div class="a t" style="left:264px;top:211.5px;">http/1.1</div>
<div class="a t" style="left:327.5px;top:211.5px;">script</div>
<div class="a t" style="left:374px;top:211.5px;text-decoration:underline">require.js:1895</div>
<div class="a t" style="right:285px;top:211.5px;">7.3 KB</div>
<div class="a t" style="right:204px;top:211.5px;">12 ms</div>
<svg class="a" style="left:6px;top:234px" width="12" height="15" viewBox="0 0 12 15"><rect x="0.5" y="0.5" width="11" height="14" fill="#fff" stroke="#8f8f8f" stroke-width="1"/><rect x="2" y="3" width="2" height="1" fill="#d4d4d4"/><rect x="5" y="3" width="5" height="1" fill="#d4d4d4"/><rect x="2" y="5" width="4" height="1" fill="#d4d4d4"/><rect x="7" y="5" width="3" height="1" fill="#d4d4d4"/><rect x="2" y="7" width="2" height="1" fill="#d4d4d4"/><rect x="5" y="7" width="5" height="1" fill="#d4d4d4"/><rect x="2" y="9" width="5" height="1" fill="#d4d4d4"/><rect x="8" y="9" width="2" height="1" fill="#d4d4d4"/><rect x="2" y="11" width="3" height="1" fill="#d4d4d4"/><rect x="6" y="11" width="1" height="1" fill="#d4d4d4"/></svg>
<div class="a t" style="left:23.5px;top:232.5px;">dataPost.js</div>
<div class="a t" style="left:201.5px;top:232.5px;">200</div>
<div class="a t" style="left:264px;top:232.5px;">http/1.1</div>
<div class="a t" style="left:327.5px;top:232.5px;">script</div>
<div class="a t" style="left:374px;top:232.5px;text-decoration:underline">require.js:1895</div>
<div class="a t" style="right:285px;top:232.5px;">1.4 KB</div>
<div class="a t" style="right:204px;top:232.5px;">8 ms</div>
<svg class="a" style="left:6px;top:255px" width="12" height="15" viewBox="0 0 12 15"><rect x="0.5" y="0.5" width="11" height="14" fill="#fff" stroke="#8f8f8f" stroke-width="1"/><rect x="2" y="3" width="2" height="1" fill="#d4d4d4"/><rect x="5" y="3" width="5" height="1" fill="#d4d4d4"/><rect x="2" y="5" width="4" height="1" fill="#d4d4d4"/><rect x="7" y="5" width="3" height="1" fill="#d4d4d4"/><rect x="2" y="7" width="2" height="1" fill="#d4d4d4"/><rect x="5" y="7" width="5" height="1" fill="#d4d4d4"/><rect x="2" y="9" width="5" height="1" fill="#d4d4d4"/><rect x="8" y="9" width="2" height="1" fill="#d4d4d4"/><rect x="2" y="11" width="3" height="1" fill="#d4d4d4"/><rect x="6" y="11" width="1" height="1" fill="#d4d4d4"/></svg>
<div class="a t" style="left:23.5px;top:253.5px;">bootstrap.js</div>
<div class="a t" style="left:201.5px;top:253.5px;">200</div>
<div class="a t" style="left:264px;top:253.5px;">http/1.1</div>
<div class="a t" style="left:327.5px;top:253.5px;">script</div>
<div class="a t" style="left:374px;top:253.5px;text-decoration:underline">require.js:1895</div>
<div class="a t" style="right:285px;top:253.5px;">721 B</div>
<div class="a t" style="right:204px;top:253.5px;">8 ms</div>
<svg class="a" style="left:6px;top:276px" width="12" height="15" viewBox="0 0 12 15"><rect x="0.5" y="0.5" width="11" height="14" fill="#fff" stroke="#8f8f8f" stroke-width="1"/><rect x="2" y="3" width="2" height="1" fill="#d4d4d4"/><rect x="5" y="3" width="5" height="1" fill="#d4d4d4"/><rect x="2" y="5" width="4" height="1" fill="#d4d4d4"/><rect x="7" y="5" width="3" height="1" fill="#d4d4d4"/><rect x="2" y="7" width="2" height="1" fill="#d4d4d4"/><rect x="5" y="7" width="5" height="1" fill="#d4d4d4"/><rect x="2" y="9" width="5" height="1" fill="#d4d4d4"/><rect x="8" y="9" width="2" height="1" fill="#d4d4d4"/><rect x="2" y="11" width="3" height="1" fill="#d4d4d4"/><rect x="6" y="11" width="1" height="1" fill="#d4d4d4"/></svg>
<div class="a t" style="left:23.5px;top:274.5px;">jquery.js</div>
<div class="a t" style="left:201.5px;top:274.5px;">200</div>
<div class="a t" style="left:264px;top:274.5px;">http/1.1</div>
<div class="a t" style="left:327.5px;top:274.5px;">script</div>
<div class="a t" style="left:374px;top:274.5px;text-decoration:underline">require.js:1895</div>
<div class="a t" style="right:285px;top:274.5px;">87.1 KB</div>
<div class="a t" style="right:204px;top:274.5px;">29 ms</div>
<svg class="a" style="left:6px;top:297px" width="12" height="15" viewBox="0 0 12 15"><rect x="0.5" y="0.5" width="11" height="14" fill="#fff" stroke="#8f8f8f" stroke-width="1"/></svg>
<div class="a t" style="left:23.5px;top:295.5px;">opensans-400.woff2</div>
<div class="a t" style="left:201.5px;top:295.5px;">200</div>
<div class="a t" style="left:264px;top:295.5px;">http/1.1</div>
<div class="a t" style="left:327.5px;top:295.5px;">font</div>
<div class="a t" style="left:374px;top:295.5px;text-decoration:underline">(index)</div>
<div class="a t" style="right:285px;top:295.5px;">17.8 KB</div>
<div class="a t" style="right:204px;top:295.5px;">27 ms</div>
<svg class="a" style="left:6px;top:318px" width="12" height="15" viewBox="0 0 12 15"><rect x="0.5" y="0.5" width="11" height="14" fill="#fff" stroke="#8f8f8f" stroke-width="1"/></svg>
<div class="a t" style="left:23.5px;top:316.5px;">Luma-Icons.woff2</div>
<div class="a t" style="left:201.5px;top:316.5px;">200</div>
<div class="a t" style="left:264px;top:316.5px;">http/1.1</div>
<div class="a t" style="left:327.5px;top:316.5px;">font</div>
<div class="a t" style="left:374px;top:316.5px;text-decoration:underline">(index)</div>
<div class="a t" style="right:285px;top:316.5px;">3.6 KB</div>
<div class="a t" style="right:204px;top:316.5px;">25 ms</div>
<svg class="a" style="left:6px;top:339px" width="12" height="15" viewBox="0 0 12 15"><rect x="0.5" y="0.5" width="11" height="14" fill="#fff" stroke="#8f8f8f" stroke-width="1"/><rect x="2" y="3" width="2" height="1" fill="#d4d4d4"/><rect x="5" y="3" width="5" height="1" fill="#d4d4d4"/><rect x="2" y="5" width="4" height="1" fill="#d4d4d4"/><rect x="7" y="5" width="3" height="1" fill="#d4d4d4"/><rect x="2" y="7" width="2" height="1" fill="#d4d4d4"/><rect x="5" y="7" width="5" height="1" fill="#d4d4d4"/><rect x="2" y="9" width="5" height="1" fill="#d4d4d4"/><rect x="8" y="9" width="2" height="1" fill="#d4d4d4"/><rect x="2" y="11" width="3" height="1" fill="#d4d4d4"/><rect x="6" y="11" width="1" height="1" fill="#d4d4d4"/></svg>
<div class="a t" style="left:23.5px;top:337.5px;">translate-inline.js</div>
<div class="a t" style="left:201.5px;top:337.5px;">200</div>
<div class="a t" style="left:264px;top:337.5px;">http/1.1</div>
<div class="a t" style="left:327.5px;top:337.5px;">script</div>
<div class="a t" style="left:374px;top:337.5px;text-decoration:underline">require.js:1895</div>
<div class="a t" style="right:285px;top:337.5px;">2.1 KB</div>
<div class="a t" style="right:204px;top:337.5px;">4 ms</div>
<svg class="a" style="left:6px;top:360px" width="12" height="15" viewBox="0 0 12 15"><rect x="0.5" y="0.5" width="11" height="14" fill="#fff" stroke="#8f8f8f" stroke-width="1"/><rect x="2" y="3" width="2" height="1" fill="#d4d4d4"/><rect x="5" y="3" width="5" height="1" fill="#d4d4d4"/><rect x="2" y="5" width="4" height="1" fill="#d4d4d4"/><rect x="7" y="5" width="3" height="1" fill="#d4d4d4"/><rect x="2" y="7" width="2" height="1" fill="#d4d4d4"/><rect x="5" y="7" width="5" height="1" fill="#d4d4d4"/><rect x="2" y="9" width="5" height="1" fill="#d4d4d4"/><rect x="8" y="9" width="2" height="1" fill="#d4d4d4"/><rect x="2" y="11" width="3" height="1" fill="#d4d4d4"/><rect x="6" y="11" width="1" height="1" fill="#d4d4d4"/></svg>
<div class="a t" style="left:23.5px;top:358.5px;">responsive.js</div>
<div class="a t" style="left:201.5px;top:358.5px;">200</div>
<div class="a t" style="left:264px;top:358.5px;">http/1.1</div>
<div class="a t" style="left:327.5px;top:358.5px;">script</div>
<div class="a t" style="left:374px;top:358.5px;text-decoration:underline">require.js:1895</div>
<div class="a t" style="right:285px;top:358.5px;">1.2 KB</div>
<div class="a t" style="right:204px;top:358.5px;">4 ms</div>
<svg class="a" style="left:6px;top:381px" width="12" height="15" viewBox="0 0 12 15"><rect x="0.5" y="0.5" width="11" height="14" fill="#fff" stroke="#8f8f8f" stroke-width="1"/><rect x="2" y="3" width="2" height="1" fill="#d4d4d4"/><rect x="5" y="3" width="5" height="1" fill="#d4d4d4"/><rect x="2" y="5" width="4" height="1" fill="#d4d4d4"/><rect x="7" y="5" width="3" height="1" fill="#d4d4d4"/><rect x="2" y="7" width="2" height="1" fill="#d4d4d4"/><rect x="5" y="7" width="5" height="1" fill="#d4d4d4"/><rect x="2" y="9" width="5" height="1" fill="#d4d4d4"/><rect x="8" y="9" width="2" height="1" fill="#d4d4d4"/><rect x="2" y="11" width="3" height="1" fill="#d4d4d4"/><rect x="6" y="11" width="1" height="1" fill="#d4d4d4"/></svg>
<div class="a t" style="left:23.5px;top:379.5px;">theme.js</div>
<div class="a t" style="left:201.5px;top:379.5px;">200</div>
<div class="a t" style="left:264px;top:379.5px;">http/1.1</div>
<div class="a t" style="left:327.5px;top:379.5px;">script</div>
<div class="a t" style="left:374px;top:379.5px;text-decoration:underline">require.js:1895</div>
<div class="a t" style="right:285px;top:379.5px;">899 B</div>
<div class="a t" style="right:204px;top:379.5px;">4 ms</div>
<svg class="a" style="left:6px;top:402px" width="12" height="15" viewBox="0 0 12 15"><rect x="0.5" y="0.5" width="11" height="14" fill="#fff" stroke="#8f8f8f" stroke-width="1"/><rect x="2" y="3" width="2" height="1" fill="#d4d4d4"/><rect x="5" y="3" width="5" height="1" fill="#d4d4d4"/><rect x="2" y="5" width="4" height="1" fill="#d4d4d4"/><rect x="7" y="5" width="3" height="1" fill="#d4d4d4"/><rect x="2" y="7" width="2" height="1" fill="#d4d4d4"/><rect x="5" y="7" width="5" height="1" fill="#d4d4d4"/><rect x="2" y="9" width="5" height="1" fill="#d4d4d4"/><rect x="8" y="9" width="2" height="1" fill="#d4d4d4"/><rect x="2" y="11" width="3" height="1" fill="#d4d4d4"/><rect x="6" y="11" width="1" height="1" fill="#d4d4d4"/></svg>
<div class="a t" style="left:23.5px;top:400.5px;">translate.js</div>
<div class="a t" style="left:201.5px;top:400.5px;">200</div>
<div class="a t" style="left:264px;top:400.5px;">http/1.1</div>
<div class="a t" style="left:327.5px;top:400.5px;">script</div>
<div class="a t" style="left:374px;top:400.5px;text-decoration:underline">require.js:1895</div>
<div class="a t" style="right:285px;top:400.5px;">1.0 KB</div>
<div class="a t" style="right:204px;top:400.5px;">3 ms</div>
<svg class="a" style="left:6px;top:423px" width="12" height="15" viewBox="0 0 12 15"><rect x="0.5" y="0.5" width="11" height="14" fill="#fff" stroke="#8f8f8f" stroke-width="1"/></svg>
<div class="a t" style="left:23.5px;top:421.5px;">opensans-300.woff2</div>
<div class="a t" style="left:201.5px;top:421.5px;">200</div>
<div class="a t" style="left:264px;top:421.5px;">http/1.1</div>
<div class="a t" style="left:327.5px;top:421.5px;">font</div>
<div class="a t" style="left:374px;top:421.5px;text-decoration:underline">(index)</div>
<div class="a t" style="right:285px;top:421.5px;">17.4 KB</div>
<div class="a t" style="right:204px;top:421.5px;">4 ms</div>
<svg class="a" style="left:6px;top:444px" width="12" height="15" viewBox="0 0 12 15"><rect x="0.5" y="0.5" width="11" height="14" fill="#fff" stroke="#8f8f8f" stroke-width="1"/><rect x="2" y="3" width="2" height="1" fill="#d4d4d4"/><rect x="5" y="3" width="5" height="1" fill="#d4d4d4"/><rect x="2" y="5" width="4" height="1" fill="#d4d4d4"/><rect x="7" y="5" width="3" height="1" fill="#d4d4d4"/><rect x="2" y="7" width="2" height="1" fill="#d4d4d4"/><rect x="5" y="7" width="5" height="1" fill="#d4d4d4"/><rect x="2" y="9" width="5" height="1" fill="#d4d4d4"/><rect x="8" y="9" width="2" height="1" fill="#d4d4d4"/><rect x="2" y="11" width="3" height="1" fill="#d4d4d4"/><rect x="6" y="11" width="1" height="1" fill="#d4d4d4"/></svg>
<div class="a t" style="left:23.5px;top:442.5px;letter-spacing:0.2px">ip.html?ip=192.168.56.1…</div>
<div class="a t" style="left:201.5px;top:442.5px;color:#858585;">200</div>
<div class="a t" style="left:264px;top:442.5px;">chrom…</div>
<div class="a t" style="left:327.5px;top:442.5px;">doc…</div>
<div class="a t" style="left:374px;top:442.5px;text-decoration:underline">inject.js:29</div>
<div class="a t" style="right:285px;top:442.5px;color:#858585;">(disk c…</div>
<div class="a t" style="right:204px;top:442.5px;">20 ms</div>
<svg class="a" style="left:6px;top:465px" width="12" height="15" viewBox="0 0 12 15"><rect x="0.5" y="0.5" width="11" height="14" fill="#fff" stroke="#8f8f8f" stroke-width="1"/></svg>
<div class="a t" style="left:23.5px;top:463.5px;">opensans-600.woff2</div>
<div class="a t" style="left:201.5px;top:463.5px;">200</div>
<div class="a t" style="left:264px;top:463.5px;">http/1.1</div>
<div class="a t" style="left:327.5px;top:463.5px;">font</div>
<div class="a t" style="left:374px;top:463.5px;text-decoration:underline">(index)</div>
<div class="a t" style="right:285px;top:463.5px;">17.9 KB</div>
<div class="a t" style="right:204px;top:463.5px;">1 ms</div>
</div>
<div class="a" style="left:652px;top:211px;width:163px;height:13px;background:#00c853;border-radius:2px"></div>
<div class="a" style="left:790px;top:211px;width:1px;height:13px;background:rgba(0,0,0,0.12);"></div>
<div class="a" style="left:817px;top:207px;width:2px;height:472px;background:rgba(40,120,220,0.6);"></div>
<div class="a" style="left:828px;top:207px;width:2px;height:472px;background:rgba(200,60,60,0.6);"></div>
<div class="a" style="left:813px;top:234px;width:1px;height:9px;background:#eadfcf;"></div>
<div class="a" style="left:814px;top:233px;width:2px;height:11px;background:#0a9ef0;"></div>
<div class="a" style="left:813px;top:255px;width:1px;height:9px;background:#eadfcf;"></div>
<div class="a" style="left:814px;top:254px;width:2px;height:11px;background:#0a9ef0;"></div>
<div class="a" style="left:813px;top:276px;width:1px;height:9px;background:#eadfcf;"></div>
<div class="a" style="left:814px;top:275px;width:2px;height:11px;background:#0a9ef0;"></div>
<div class="a" style="left:813px;top:297px;width:1px;height:9px;background:#eadfcf;"></div>
<div class="a" style="left:814px;top:296px;width:3px;height:11px;background:#0a9ef0;"></div>
<div class="a" style="left:813px;top:318px;width:1px;height:9px;background:#eadfcf;"></div>
<div class="a" style="left:814px;top:317px;width:2px;height:11px;background:#0a9ef0;"></div>
<div class="a" style="left:813px;top:339px;width:1px;height:9px;background:#eadfcf;"></div>
<div class="a" style="left:814px;top:338px;width:3px;height:11px;background:#0a9ef0;"></div>
<div class="a" style="left:813px;top:360px;width:1px;height:9px;background:#eadfcf;"></div>
<div class="a" style="left:814px;top:359px;width:2px;height:11px;background:#0a9ef0;"></div>
<div class="a" style="left:813px;top:381px;width:1px;height:9px;background:#eadfcf;"></div>
<div class="a" style="left:814px;top:380px;width:2px;height:11px;background:#0a9ef0;"></div>
<div class="a" style="left:814px;top:402px;width:1px;height:9px;background:#eadfcf;"></div>
<div class="a" style="left:815px;top:401px;width:2px;height:11px;background:#0a9ef0;"></div>
<div class="a" style="left:815px;top:423px;width:1px;height:9px;background:#eadfcf;"></div>
<div class="a" style="left:816px;top:422px;width:2px;height:11px;background:#0a9ef0;"></div>
<div class="a" style="left:815px;top:444px;width:1px;height:9px;background:#eadfcf;"></div>
<div class="a" style="left:816px;top:443px;width:2px;height:11px;background:#0a9ef0;"></div>
<div class="a" style="left:815px;top:465px;width:1px;height:9px;background:#eadfcf;"></div>
<div class="a" style="left:816px;top:464px;width:2px;height:11px;background:#0a9ef0;"></div>
<div class="a" style="left:815px;top:486px;width:1px;height:9px;background:#eadfcf;"></div>
<div class="a" style="left:816px;top:485px;width:2px;height:11px;background:#0a9ef0;"></div>
<div class="a" style="left:815px;top:507px;width:1px;height:9px;background:#eadfcf;"></div>
<div class="a" style="left:816px;top:506px;width:2px;height:11px;background:#0a9ef0;"></div>
<div class="a" style="left:815px;top:528px;width:1px;height:9px;background:#eadfcf;"></div>
<div class="a" style="left:816px;top:527px;width:2px;height:11px;background:#0a9ef0;"></div>
<div class="a" style="left:815px;top:549px;width:1px;height:9px;background:#eadfcf;"></div>
<div class="a" style="left:816px;top:548px;width:2px;height:11px;background:#0a9ef0;"></div>
<div class="a" style="left:816px;top:570px;width:1px;height:9px;background:#eadfcf;"></div>
<div class="a" style="left:817px;top:569px;width:2px;height:11px;background:#0a9ef0;"></div>
<div class="a" style="left:816px;top:591px;width:1px;height:9px;background:#eadfcf;"></div>
<div class="a" style="left:817px;top:590px;width:2px;height:11px;background:#0a9ef0;"></div>
<div class="a" style="left:816px;top:612px;width:1px;height:9px;background:#eadfcf;"></div>
<div class="a" style="left:817px;top:611px;width:2px;height:11px;background:#0a9ef0;"></div>
<div class="a" style="left:816px;top:633px;width:1px;height:9px;background:#eadfcf;"></div>
<div class="a" style="left:817px;top:632px;width:2px;height:11px;background:#0a9ef0;"></div>
<div class="a" style="left:816px;top:654px;width:1px;height:9px;background:#eadfcf;"></div>
<div class="a" style="left:817px;top:653px;width:3px;height:11px;background:#0a9ef0;"></div>
<div class="a" style="left:816px;top:675px;width:1px;height:4px;background:#eadfcf;"></div>
<div class="a" style="left:817px;top:674px;width:2px;height:5px;background:#0a9ef0;"></div>
<div class="a" style="left:845px;top:228px;width:1px;height:451px;background:#ffffff;"></div>
<div class="a" style="left:845px;top:117px;width:1px;height:62px;background:#dddddd;"></div>
<div class="a t" style="left:30px;top:685px;color:#5a5a5a;">200 requests</div>
<div class="a t" style="left:128px;top:685px;color:#5a5a5a;">1002 KB transferred</div>
<div class="a t" style="left:268px;top:685px;color:#5a5a5a;">3.1 MB resources</div>
<div class="a t" style="left:390.5px;top:685px;color:#5a5a5a;">Finish: 6.91 s</div>
<div class="a t" style="left:488.5px;top:685px;color:#1565c0;">DOMContentLoaded: 5.94 s</div>
<div class="a t" style="left:672px;top:685px;color:#b71c1c;">Load: 6.32 s</div>
<div class="a" style="left:118px;top:685px;width:1px;height:15px;background:#d0d0d0;"></div>
<div class="a" style="left:258px;top:685px;width:1px;height:15px;background:#d0d0d0;"></div>
<div class="a" style="left:380px;top:685px;width:1px;height:15px;background:#d0d0d0;"></div>
<div class="a" style="left:478px;top:685px;width:1px;height:15px;background:#d0d0d0;"></div>
<div class="a" style="left:662px;top:685px;width:1px;height:15px;background:#d0d0d0;"></div>
</div></body></html>
